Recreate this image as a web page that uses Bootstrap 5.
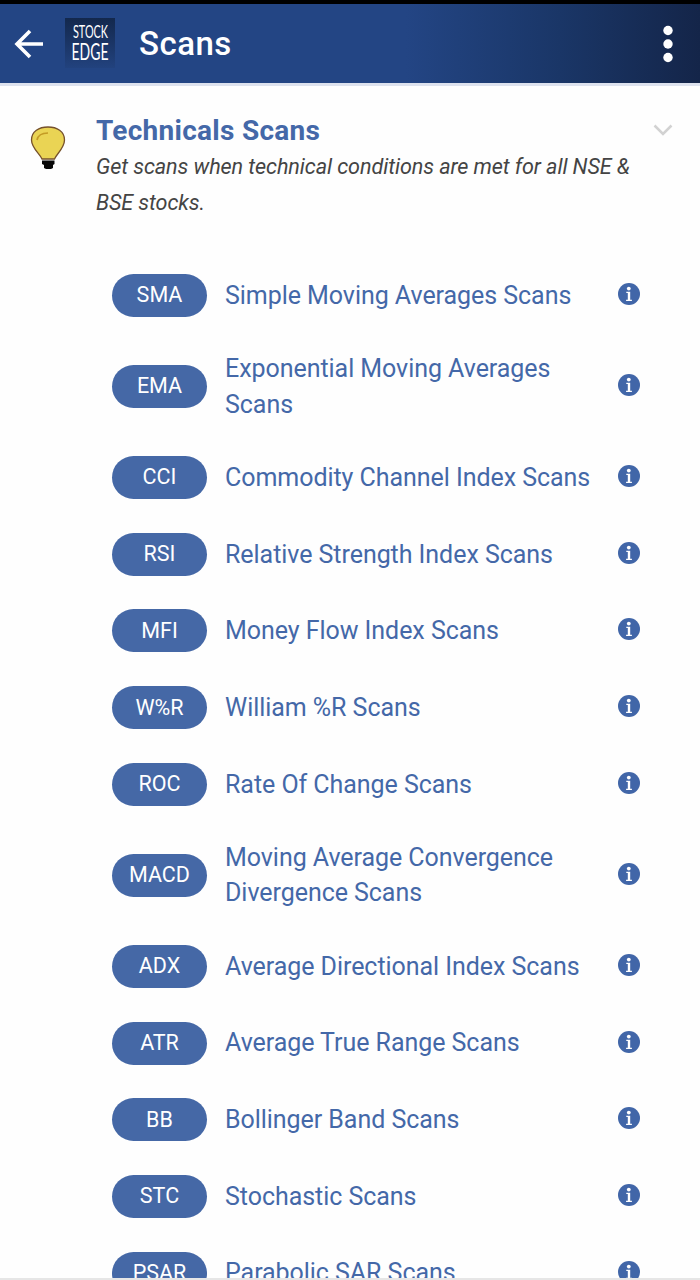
<!DOCTYPE html>
<html lang="en">
<head>
<meta charset="utf-8">
<meta name="viewport" content="width=device-width, initial-scale=1">
<title>Scans</title>
<link href="https://cdn.jsdelivr.net/npm/bootstrap@5.3.0/dist/css/bootstrap.min.css" rel="stylesheet">
<style>
  body { font-family: Roboto, "Liberation Sans", sans-serif; height: 1280px; background: #fefefe; }
  .app-screen { height: 1278px; }
  .app-bar { height: 86px; border-top: 4px solid #000; border-bottom: 3px solid #dde2ee;
    background: linear-gradient(90deg, #234584 0, #234584 58%, #1a3667 80%, #142549 100%); }
  .back-icon { margin-left: 14px; }
  .logo-tile { width: 50px; height: 50px; margin-left: 21px; margin-top: -1px; }
  .bar-title { font-size: 33px; font-weight: 500; margin-left: 24px; letter-spacing: .5px; }
  .menu-icon { margin-right: 26px; }
  .intro { padding: 27px 27px 0 30px; height: 171.2px; }
  .bulb-icon { margin-top: 12px; margin-right: 30px; }
  .intro-title { font-size: 28px; line-height: 36px; font-weight: 700; color: #4468a8; letter-spacing: .27px; }
  .intro-text { font-size: 21.6px; line-height: 35.6px; color: #444; width: 557px; letter-spacing: -.09px; }
  .chevron-icon { margin-top: 11px; }
  .scan-item { min-height: 76.7px; padding: 17px 60px 17px 112px; height: 76.7px; color: #4468a8; }
  .scan-item.two-line { height: 105.4px; }
  .scan-pill { width: 95px; height: 43px; background: #4568a6; font-size: 21.5px; }
  .scan-name { margin-left: 18px; width: 375px; font-size: 25px; line-height: 35.6px; letter-spacing: -.05px; }
  .info-icon { margin-top: -3px; }
  .foot-line { height: 2px; background: #e6e6e6; }
</style>
</head>
<body class="overflow-hidden">
<div class="app-screen overflow-hidden">
  <header class="app-bar d-flex align-items-center text-white">
    <svg class="back-icon flex-shrink-0" width="30" height="30" viewBox="0 0 30 30" fill="none" stroke="#fff" stroke-width="3.6"><path d="M29 15H3M16 2 3 15l13 13"/></svg>
    <svg class="logo-tile flex-shrink-0" viewBox="0 0 50 50" role="img" aria-label="Stock Edge">
      <defs><linearGradient id="tile" x2="0" y2="1"><stop stop-color="#13284d"/><stop offset="1" stop-color="#22427e"/></linearGradient></defs>
      <rect width="50" height="50" fill="url(#tile)"/>
      <g fill="#fff" font-family="Lato, sans-serif">
        <text x="8" y="20" font-size="16.500" textLength="35" lengthAdjust="spacingAndGlyphs">STOCK</text>
        <text x="6.500" y="42" font-size="23.500" textLength="37" lengthAdjust="spacingAndGlyphs">EDGE</text>
      </g>
    </svg>
    <h1 class="bar-title mb-0">Scans</h1>
    <svg class="menu-icon ms-auto" width="12" height="38" viewBox="0 0 12 38" fill="#fff"><circle cx="6" cy="5.5" r="4.7"/><circle cx="6" cy="19" r="4.7"/><circle cx="6" cy="32.5" r="4.7"/></svg>
  </header>
  <main>
    <section class="intro d-flex align-items-start">
      <svg class="bulb-icon flex-shrink-0" width="36" height="46" viewBox="0 0 36 46">
        <path d="M12 34C10 29 1.500 23 1.500 15 1.500 6.500 9 2 18 2s16.500 4.500 16.500 13c0 8-8 14-10 19z" fill="#ead454" stroke="#76512c" stroke-width="1.300"/>
        <path d="M7 15c1-5 5-7 11-7" fill="none" stroke="#c49b25" stroke-width="1.700"/>
        <path d="M12 35.500h12.500v3.500l-1.500 1v3l-2 1h-5l-2-1v-3l-2-1z" fill="#080808"/>
      </svg>
      <div>
        <h2 class="intro-title mb-0">Technicals Scans</h2>
        <p class="intro-text fst-italic mb-0">Get scans when technical conditions are met for all NSE &amp;<br>BSE stocks.</p>
      </div>
      <svg class="chevron-icon flex-shrink-0" width="20" height="13" viewBox="0 0 20 13" fill="none" stroke="#d2d2d2" stroke-width="2.500"><path d="m1.500 1.500 8.500 8.500 8.500-8.500"/></svg>
    </section>
    <ul class="list-unstyled mb-0" id="scanList"></ul>
  </main>
</div>
<div class="foot-line"></div>
<script src="https://cdn.jsdelivr.net/npm/bootstrap@5.3.0/dist/js/bootstrap.bundle.min.js"></script>
<script>
  const scans = [
    ["SMA", "Simple Moving Averages Scans"],
    ["EMA", "Exponential Moving Averages<br>Scans"],
    ["CCI", "Commodity Channel Index Scans"],
    ["RSI", "Relative Strength Index Scans"],
    ["MFI", "Money Flow Index Scans"],
    ["W%R", "William %R Scans"],
    ["ROC", "Rate Of Change Scans"],
    ["MACD", "Moving Average Convergence<br>Divergence Scans"],
    ["ADX", "Average Directional Index Scans"],
    ["ATR", "Average True Range Scans"],
    ["BB", "Bollinger Band Scans"],
    ["STC", "Stochastic Scans"],
    ["PSAR", "Parabolic SAR Scans"]
  ];
  document.getElementById("scanList").innerHTML = scans.map(([code, name]) => `
    <li class="scan-item ${name.includes("<br>") ? "two-line" : ""} d-flex align-items-center">
      <span class="scan-pill rounded-pill text-white d-flex align-items-center justify-content-center flex-shrink-0">${code}</span>
      <span class="scan-name flex-shrink-0 text-nowrap">${name}</span>
      <svg class="info-icon ms-auto flex-shrink-0" width="22" height="22" viewBox="0 0 22 22"><circle cx="11" cy="11" r="11" fill="#4166a8"/><circle cx="10.800" cy="5.600" r="1.900" fill="#fff"/><path d="M8.300 8.800H12.200v8h1.700v1.300H8.100v-1.300h1.700v-6.700H8.300z" fill="#fff"/></svg>
    </li>`).join("");
</script>
</body>
</html>
